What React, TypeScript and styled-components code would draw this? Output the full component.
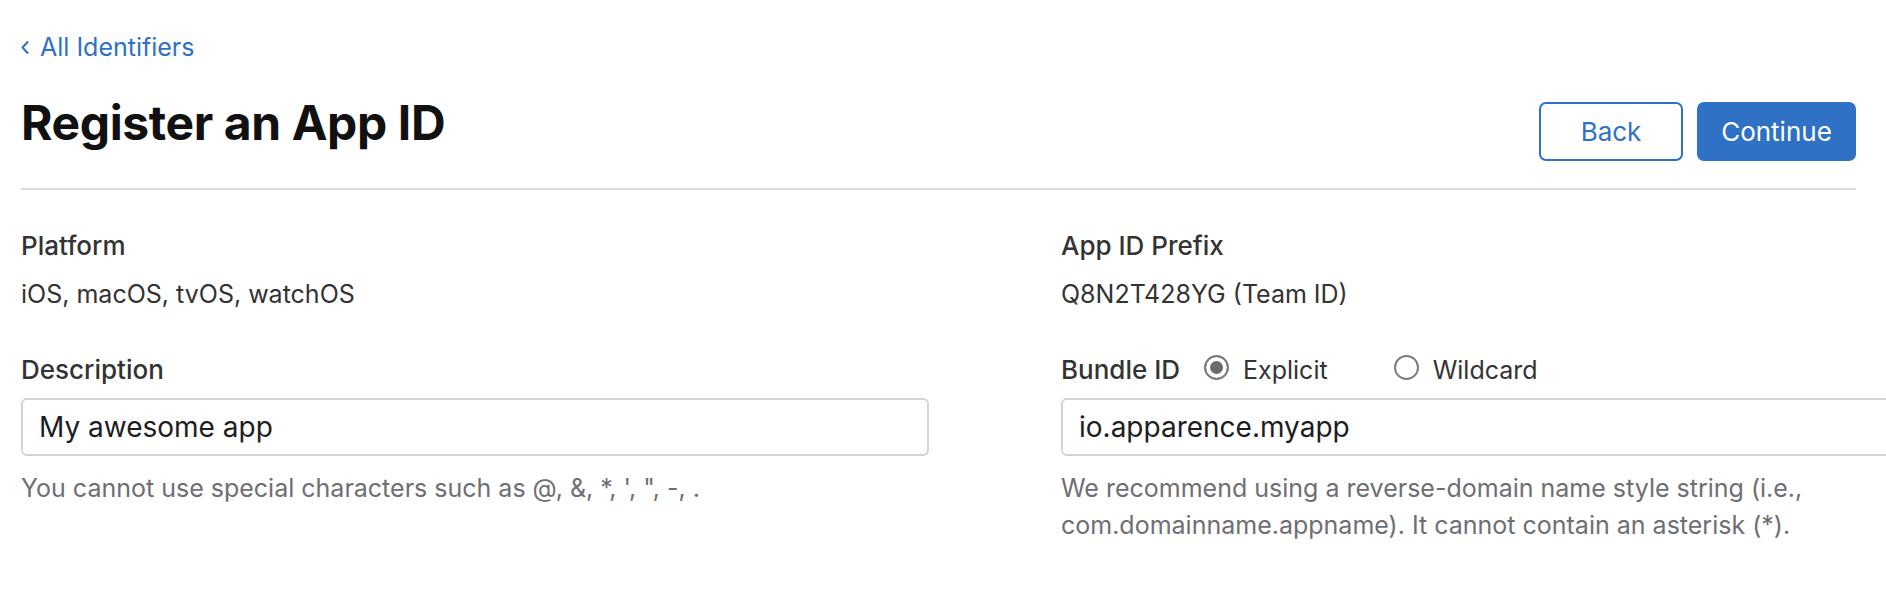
import React from "react";
import styled, { createGlobalStyle } from "styled-components";

const GlobalStyle = createGlobalStyle`
  html, body {
    margin: 0;
    padding: 0;
    background: #ffffff;
  }
  body {
    font-family: Inter, "Noto Sans", Arial, sans-serif;
    overflow: hidden;
    -webkit-font-smoothing: antialiased;
  }
`;

const Page = styled.main`
  width: 1886px;
  box-sizing: border-box;
  padding: 31px 30px 0 21px;
`;

const BackLink = styled.a`
  display: inline-flex;
  align-items: center;
  gap: 11px;
  font-size: 25px;
  line-height: 32px;
  color: #2f71c5;
  text-decoration: none;
`;

const Header = styled.header`
  display: flex;
  justify-content: space-between;
  align-items: flex-start;
  margin-top: 31px;
  padding-bottom: 27px;
  border-bottom: 2px solid #dcdcdc;
`;

const Title = styled.h1`
  margin: 0;
  font-size: 48px;
  line-height: 57px;
  font-weight: 700;
  color: #111111;
  letter-spacing: -0.4px;
`;

const Actions = styled.div`
  display: flex;
  gap: 14px;
  padding-top: 8px;
`;

const Button = styled.button<{ $primary?: boolean; $width: number }>`
  width: ${(p) => p.$width}px;
  height: 59px;
  box-sizing: border-box;
  border: 2px solid #2f71c5;
  border-radius: 7px;
  padding: 0;
  font-family: inherit;
  font-size: 26px;
  font-weight: 400;
  cursor: pointer;
  color: ${(p) => (p.$primary ? "#ffffff" : "#2f71c5")};
  background: ${(p) => (p.$primary ? "#2f71c5" : "#ffffff")};
`;

const Form = styled.section`
  display: grid;
  grid-template-columns: 908px 794px;
  column-gap: 132px;
  row-gap: 44px;
  padding-top: 40px;
`;

const Field = styled.div`
  display: flex;
  flex-direction: column;
`;

const LabelRow = styled.div`
  display: flex;
  align-items: center;
  height: 32px;
`;

const Label = styled.label`
  font-size: 26px;
  line-height: 32px;
  font-weight: 500;
  color: #333333;
`;

const Value = styled.div`
  margin-top: 16px;
  font-size: 25px;
  line-height: 32px;
  color: #333333;
`;

const TextInput = styled.input`
  margin-top: 12px;
  width: 908px;
  height: 58px;
  box-sizing: border-box;
  border: 2px solid #d4d4d4;
  border-radius: 6px;
  padding: 0 16px;
  font-family: inherit;
  font-size: 28px;
  color: #1d1d1f;
  background: #ffffff;
  outline: none;
`;

const Hint = styled.p`
  margin: 14px 0 0;
  font-size: 25px;
  line-height: 37px;
  color: #6e6e73;
`;

const RadioGroup = styled.div`
  display: flex;
  align-items: center;
  gap: 66px;
  margin-left: 24px;
`;

const RadioOption = styled.label`
  display: flex;
  align-items: center;
  gap: 14px;
  font-size: 25px;
  line-height: 32px;
  color: #333333;
`;

const Radio = styled.input`
  appearance: none;
  margin: 0;
  width: 25px;
  height: 25px;
  box-sizing: border-box;
  border: 2px solid #7c7c7c;
  border-radius: 50%;
  background: #ffffff;
  position: relative;
  top: -3px;
  &:checked {
    background: #6b6b6b;
    box-shadow: inset 0 0 0 4px #ffffff;
  }
`;

const Chevron = () => (
  <svg width="8" height="13" viewBox="0 0 8 13" fill="none">
    <polyline points="6.5,1 1.5,6.5 6.5,12" stroke="#2f71c5" strokeWidth="2" strokeLinecap="round" strokeLinejoin="round" />
  </svg>
);

const App: React.FC = () => {
  return (
    <>
      <GlobalStyle />
      <Page>
        <BackLink href="#">
          <Chevron />
          All Identifiers
        </BackLink>
        <Header>
          <Title>Register an App ID</Title>
          <Actions>
            <Button $width={144}>Back</Button>
            <Button $width={159} $primary>
              Continue
            </Button>
          </Actions>
        </Header>
        <Form>
          <Field>
            <LabelRow>
              <Label>Platform</Label>
            </LabelRow>
            <Value>iOS, macOS, tvOS, watchOS</Value>
          </Field>
          <Field>
            <LabelRow>
              <Label>App ID Prefix</Label>
            </LabelRow>
            <Value>Q8N2T428YG (Team ID)</Value>
          </Field>
          <Field>
            <LabelRow>
              <Label htmlFor="description">Description</Label>
            </LabelRow>
            <TextInput id="description" defaultValue="My awesome app" />
            <Hint>You cannot use special characters such as @, &amp;, *, ', ", -, .</Hint>
          </Field>
          <Field>
            <LabelRow>
              <Label htmlFor="bundle">Bundle ID</Label>
              <RadioGroup>
                <RadioOption>
                  <Radio type="radio" name="bundleType" defaultChecked />
                  Explicit
                </RadioOption>
                <RadioOption>
                  <Radio type="radio" name="bundleType" />
                  Wildcard
                </RadioOption>
              </RadioGroup>
            </LabelRow>
            <TextInput id="bundle" defaultValue="io.apparence.myapp" />
            <Hint>
              We recommend using a reverse-domain name style string (i.e., com.domainname.appname). It cannot contain
              an asterisk (*).
            </Hint>
          </Field>
        </Form>
      </Page>
    </>
  );
};

export default App;
